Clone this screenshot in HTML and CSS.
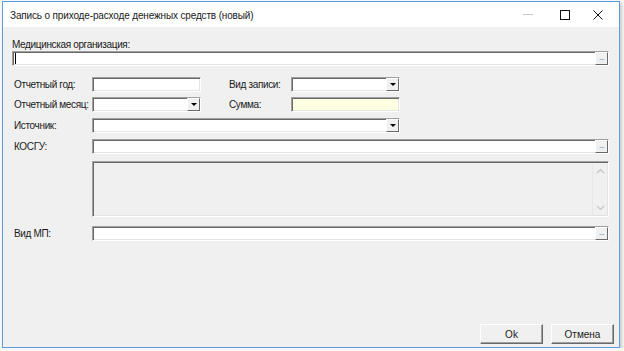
FILE: index.html
```html
<!DOCTYPE html>
<html lang="ru">
<head>
  <meta charset="UTF-8">
  <title>Запись о приходе-расходе денежных средств (новый)</title>
  <link rel="stylesheet" href="styles.css">
</head>
<body>
  <div class="window">
    <div class="titlebar">
      <span class="title">Запись о приходе-расходе денежных средств (новый)</span>
      <div class="controls">
        <span class="ctl ctl-min"></span>
        <span class="ctl ctl-max"></span>
        <span class="ctl ctl-close">
          <svg width="10" height="10" viewBox="0 0 10 10"><path d="M0.5 0.5L9.5 9.5M9.5 0.5L0.5 9.5" stroke="#111" stroke-width="1"/></svg>
        </span>
      </div>
    </div>
    <div class="form">
      <div class="top-label">Медицинская организация:</div>
      <div class="field wide"><span class="caret"></span><span class="dots">...</span></div>

      <div class="row first">
        <span class="label">Отчетный год:</span>
        <div class="field short"></div>
        <span class="label label2">Вид записи:</span>
        <div class="field short combo"><span class="arrow"></span></div>
      </div>
      <div class="row">
        <span class="label">Отчетный месяц:</span>
        <div class="field short combo"><span class="arrow"></span></div>
        <span class="label label2">Сумма:</span>
        <div class="field short yellow"></div>
      </div>
      <div class="row r3">
        <span class="label">Источник:</span>
        <div class="field medium combo"><span class="arrow"></span></div>
      </div>
      <div class="row r3">
        <span class="label">КОСГУ:</span>
        <div class="field grow"><span class="dots">...</span></div>
      </div>
      <div class="row r5">
        <span class="label"></span>
        <div class="field grow memo">
          <div class="scroll">
            <svg width="9" height="6" viewBox="0 0 9 6"><path d="M1 5L4.5 1.5L8 5" fill="none" stroke="#c4c4c4" stroke-width="1.2"/></svg>
            <svg width="9" height="6" viewBox="0 0 9 6"><path d="M1 1L4.5 4.5L8 1" fill="none" stroke="#c4c4c4" stroke-width="1.2"/></svg>
          </div>
        </div>
      </div>
      <div class="row r6">
        <span class="label">Вид МП:</span>
        <div class="field grow"><span class="dots">...</span></div>
      </div>
    </div>
    <div class="footer">
      <button class="btn">Ok</button>
      <button class="btn">Отмена</button>
    </div>
  </div>
</body>
</html>
```

FILE: styles.css
```css
body {
  margin: 0;
  padding: 1px 0 0 2px;
  background: #f7f7f7;
  font-family: "Liberation Sans", Arial, sans-serif;
  color: #000;
}
.window {
  box-sizing: border-box;
  width: 618px;
  height: 347px;
  border: 1px solid #5a9ede;
  background: #f0f0f0;
  display: flex;
  flex-direction: column;
  box-shadow: 2px 2px 3px rgba(0,0,0,0.18);
}
.titlebar {
  height: 25px;
  background: #fff;
  display: flex;
  align-items: center;
  padding-left: 7px;
}
.title {
  font-size: 10px;
  letter-spacing: -0.15px;
  flex: 1;
  padding-top: 1px;
  color: #1a1a1a;
}
.controls {
  display: flex;
  align-items: center;
  height: 100%;
}
.ctl {
  width: 37px;
  height: 100%;
  display: flex;
  align-items: center;
  justify-content: center;
}
.ctl-min::before {
  content: "";
  width: 10px;
  height: 1px;
  background: #c8c8c8;
}
.ctl-max::before {
  content: "";
  width: 8px;
  height: 8px;
  border: 1px solid #111;
}
.ctl-close {
  width: 30px;
  padding-right: 6px;
}
.form {
  flex: 1;
  padding: 11px 10px 0 9px;
  font-size: 10px;
  letter-spacing: -0.35px;
  color: #1a1a1a;
}
.top-label {
  height: 13px;
  line-height: 13px;
}
.field {
  box-sizing: border-box;
  position: relative;
  height: 15px;
  background: #fff;
  border: 1px solid;
  border-color: #a0a0a0 #fff #fff #a0a0a0;
  box-shadow: inset 1px 1px 0 #696969, inset -1px -1px 0 #e3e3e3;
}
.wide { width: 597px; }
.short { width: 109px; }
.medium { width: 308px; }
.grow { flex: 1; }
.yellow { background: #ffffe1; }
.memo {
  height: 56px;
  background: #f0f0f0;
}
.row {
  display: flex;
  align-items: center;
  margin-top: 5px;
}
.row.first { margin-top: 11px; }
.row.r3 { margin-top: 6px; }
.row.r5 { margin-top: 7px; }
.row.r6 { margin-top: 9px; }
.label {
  width: 80px;
  padding-left: 2px;
  box-sizing: border-box;
  white-space: nowrap;
}
.label2 {
  width: 62px;
  margin-left: 28px;
  padding-left: 0;
}
.caret {
  position: absolute;
  left: 2px;
  top: 1px;
  width: 1px;
  height: 11px;
  background: #000;
}
.arrow, .dots {
  position: absolute;
  right: 0;
  top: 0;
  bottom: 0;
  width: 13px;
  box-sizing: border-box;
  background: #f0f0f0;
  border: 1px solid;
  border-color: #fff #696969 #696969 #fff;
}
.arrow::after {
  content: "";
  position: absolute;
  left: 3px;
  top: 4px;
  border-left: 3px solid transparent;
  border-right: 3px solid transparent;
  border-top: 3px solid #000;
}
.dots {
  font-size: 8px;
  line-height: 10px;
  text-align: center;
  color: #4a6d9a;
  letter-spacing: -0.5px;
}
.scroll {
  position: absolute;
  right: 1px;
  top: 1px;
  bottom: 1px;
  width: 15px;
  display: flex;
  flex-direction: column;
  justify-content: space-between;
  align-items: center;
  padding: 5px 0 4px;
  box-sizing: border-box;
  border-left: 1px solid #e8e8e8;
}
.footer {
  display: flex;
  justify-content: flex-end;
  gap: 8px;
  padding: 0 5px 3px 0;
}
.btn {
  width: 63px;
  height: 20px;
  font-family: "Liberation Sans", Arial, sans-serif;
  font-size: 10px;
  background: #f0f0f0;
  border: 1px solid;
  border-color: #fff #696969 #696969 #fff;
  box-shadow: inset -1px -1px 0 #a0a0a0;
  padding: 0;
  color: #1a1a1a;
}
```
